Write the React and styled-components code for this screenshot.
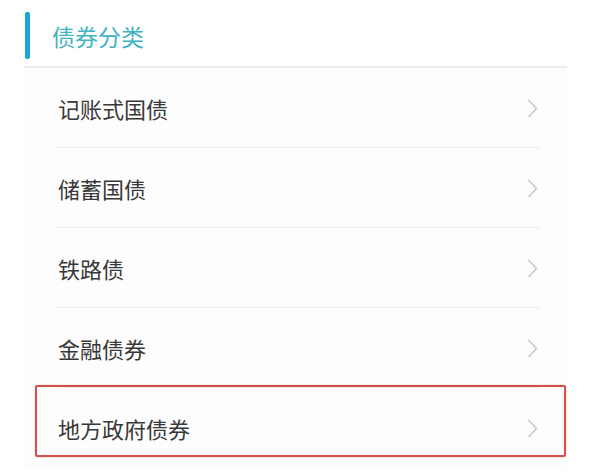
import React from "react";
import styled, { createGlobalStyle } from "styled-components";

const Global = createGlobalStyle`
  html, body { margin: 0; padding: 0; background: #ffffff; }
  body { font-family: "Noto Sans CJK SC", "Noto Sans", sans-serif; }
`;

const Page = styled.div`
  width: 543px;
  margin-left: 24px;
`;

const Header = styled.div`
  height: 66px;
  display: flex;
  align-items: flex-start;
  border-bottom: 2px solid #ececec;
  background: #ffffff;
`;

const Accent = styled.div`
  width: 5px;
  height: 47px;
  margin-top: 12px;
  margin-left: 1px;
  border-radius: 2px;
  background: #1ba6cc;
`;

const Title = styled.div`
  margin-left: 22px;
  height: 47px;
  margin-top: 12px;
  display: flex;
  align-items: center;
  font-size: 23px;
  color: #3fb3c4;
`;

const List = styled.div`
  background: #fdfdfd;
`;

const Row = styled.div`
  position: relative;
  height: 80px;
  padding: 0 27px 0 34px;
  ${(p) =>
    p.$highlight &&
    `
    &::after {
      content: "";
      position: absolute;
      top: -3px;
      bottom: 11px;
      left: 11px;
      right: 1px;
      border: 2px solid #d4504a;
      border-radius: 2px;
      box-shadow: 0 0 2px rgba(212, 80, 74, 0.35);
      pointer-events: none;
    }
  `}
`;

const RowInner = styled.div`
  height: 100%;
  box-sizing: border-box;
  display: flex;
  align-items: center;
  justify-content: space-between;
  border-bottom: ${(p) => (p.$last ? "none" : "1.5px solid #ededed")};
`;

const Label = styled.span`
  font-size: 22px;
  color: #383838;
`;

const Chevron = () => (
  <svg width="11" height="19" viewBox="0 0 11 19" style={{ marginRight: 2, marginTop: 1 }}>
    <polyline
      points="1.5,1 9.5,9.5 1.5,18"
      fill="none"
      stroke="#c2c2c2"
      strokeWidth="1.3"
    />
  </svg>
);

const items = ["记账式国债", "储蓄国债", "铁路债", "金融债券", "地方政府债券"];

export default function App() {
  return (
    <>
      <Global />
      <Page>
        <Header>
          <Accent />
          <Title>债券分类</Title>
        </Header>
        <List>
          {items.map((t, i) => (
            <Row key={t} $highlight={i === items.length - 1}>
              <RowInner $last={i === items.length - 1}>
                <Label>{t}</Label>
                <Chevron />
              </RowInner>
            </Row>
          ))}
        </List>
      </Page>
    </>
  );
}
